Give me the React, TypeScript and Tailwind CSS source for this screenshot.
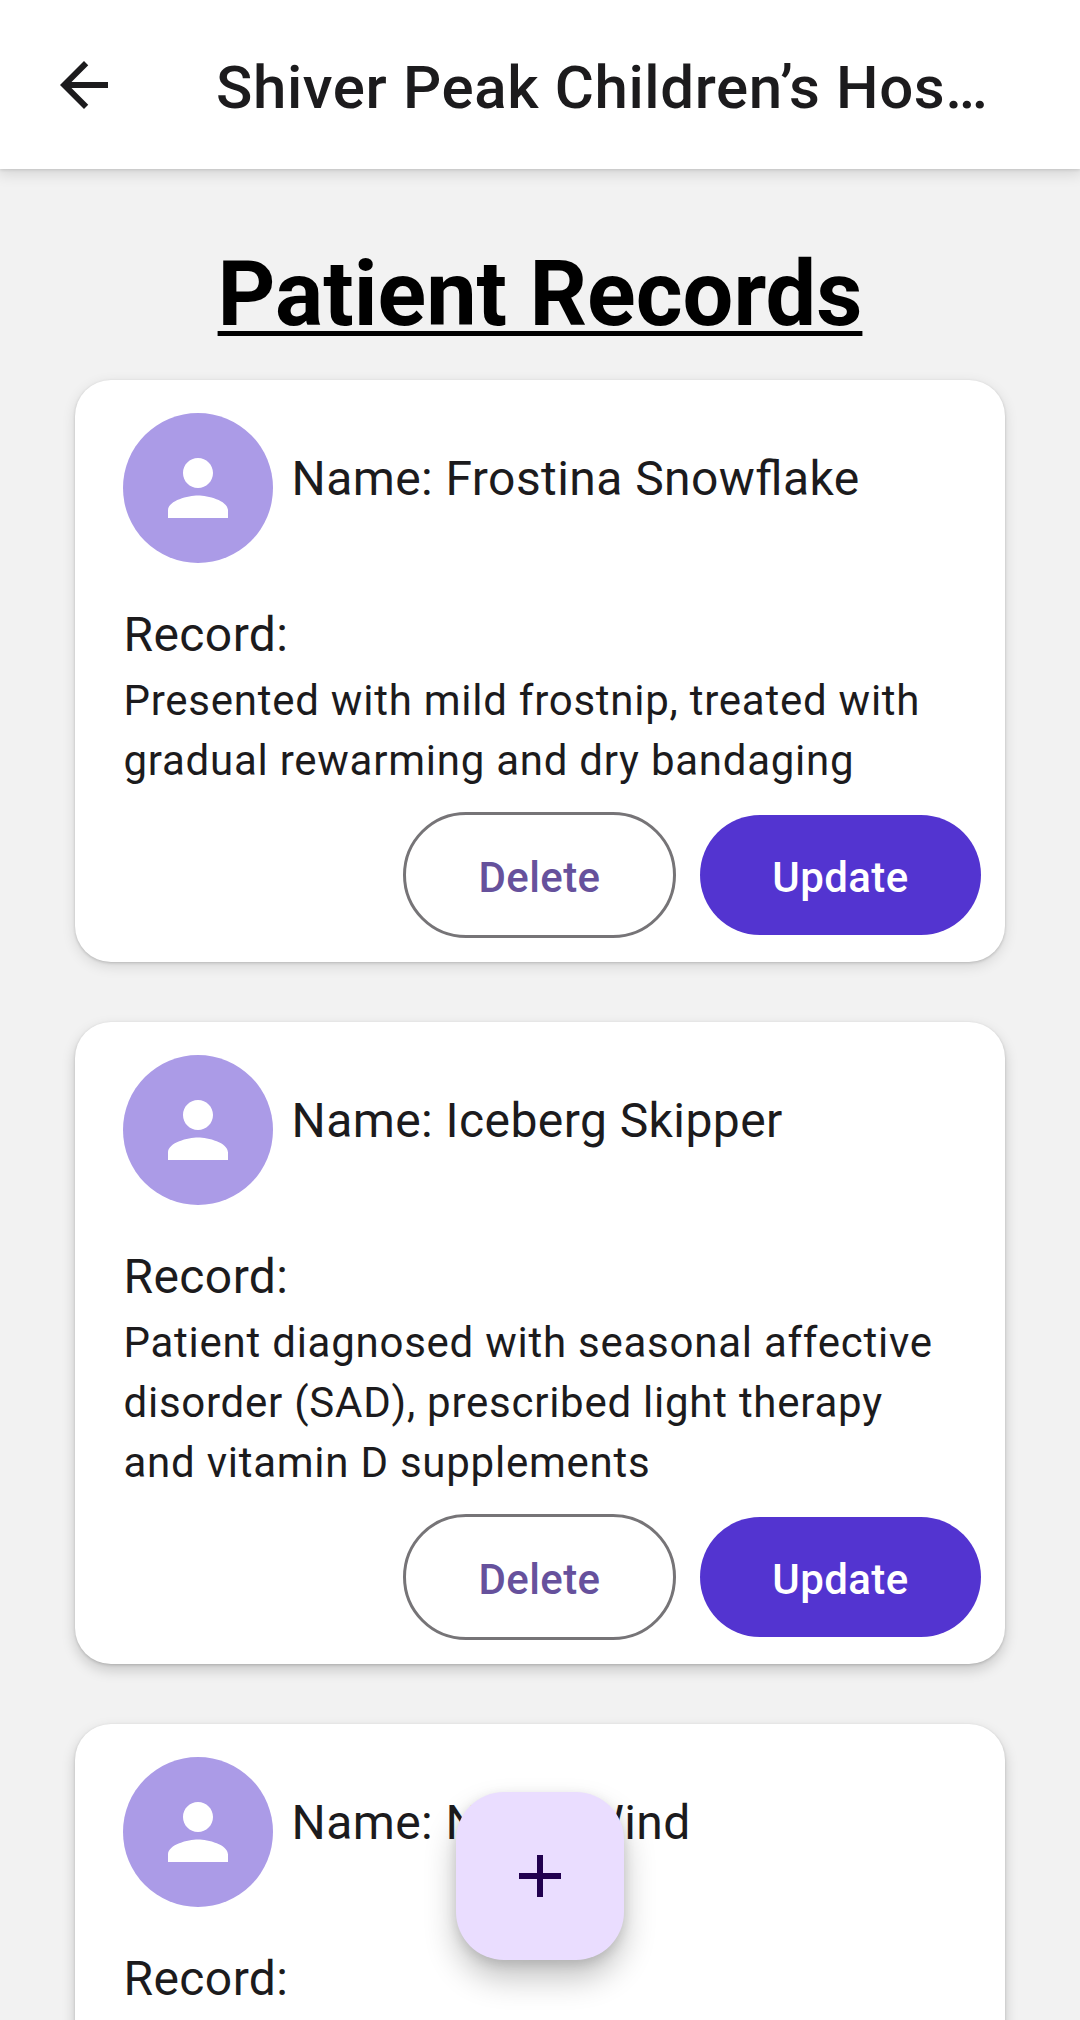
type PatientRecord = { name: string; record: string; shadow: string };

const patients: PatientRecord[] = [
  {
    name: "Frostina Snowflake",
    record: "Presented with mild frostnip, treated with gradual rewarming and dry bandaging",
    shadow: "shadow-[0_1px_3px_rgba(0,0,0,0.18),0_4px_14px_rgba(0,0,0,0.12)]",
  },
  {
    name: "Iceberg Skipper",
    record: "Patient diagnosed with seasonal affective disorder (SAD), prescribed light therapy and vitamin D supplements",
    shadow: "shadow-[0_1px_3px_rgba(0,0,0,0.16),0_6px_14px_rgba(0,0,0,0.18)]",
  },
  {
    name: "North Wind",
    record: "",
    shadow: "shadow-[0_1px_3px_rgba(0,0,0,0.16),0_6px_14px_rgba(0,0,0,0.18)]",
  },
];

function BackIcon() {
  return (
    <svg viewBox="0 0 24 24" className="size-[72px] fill-[#1c1b1d]">
      <path d="M20 11H7.83l5.59-5.59L12 4l-8 8 8 8 1.41-1.41L7.83 13H20v-2z" />
    </svg>
  );
}

function Avatar() {
  return (
    <div className="flex size-[150px] shrink-0 items-center justify-center rounded-full bg-[#ab9be7]">
      <svg viewBox="0 0 24 24" className="size-[90px] fill-white">
        <path d="M12 12c2.21 0 4-1.79 4-4s-1.79-4-4-4-4 1.79-4 4 1.79 4 4 4zm0 2c-2.67 0-8 1.34-8 4v2h16v-2c0-2.66-5.33-4-8-4z" />
      </svg>
    </div>
  );
}

function PatientCard({ name, record, shadow }: PatientRecord) {
  return (
    <article className={`flex min-h-[522px] flex-col rounded-[36px] bg-white pt-[33px] pr-6 pb-6 pl-12 ${shadow}`}>
      <div className="flex h-[150px] gap-[18px]">
        <Avatar />
        <h2 className="pt-[30px] pl-[0.5px] text-[48px] leading-[72px] tracking-[0.43px] whitespace-nowrap [font-feature-settings:'liga']">
          Name: {name}
        </h2>
      </div>
      <h3 className="mt-9 pl-[0.5px] text-[48px] leading-[72px] tracking-[0.4px]">Record:</h3>
      {record && (
        <p className="w-[834px] pl-[0.5px] text-[42px] leading-[60px] tracking-[0.75px]">{record}</p>
      )}
      {record && (
        <div className="mt-[21px] flex items-center justify-end gap-6 text-[42px] leading-[60px] font-medium tracking-[0.4px]">
          <button className="h-[126px] w-[273px] rounded-[63px] border-3 border-[#767477] pt-1.5 text-[#66519c]">
            Delete
          </button>
          <button className="h-[120px] w-[281px] rounded-[60px] bg-[#5334d0] pt-1.5 text-white">Update</button>
        </div>
      )}
    </article>
  );
}

export default function App() {
  return (
    <div className="relative flex h-[2020px] w-[1080px] flex-col overflow-hidden bg-[#f2f2f2] font-[Roboto,sans-serif] text-[#1c1b1d]">
      <header className="z-10 flex h-[169px] shrink-0 bg-white pl-12 shadow-[0_1px_3px_rgba(0,0,0,0.12),0_3px_14px_2px_rgba(0,0,0,0.12)]">
        <button className="mt-[49px] size-[72px]">
          <BackIcon />
        </button>
        <span className="mt-[46px] ml-24 text-[60px] leading-[84px] font-medium tracking-[0.62px] whitespace-nowrap">
          Shiver Peak Children’s Hos…
        </span>
      </header>
      <main className="flex flex-col px-[75px] pt-[66px]">
        <h1 className="text-center text-[90px] leading-[120px] font-bold text-black underline decoration-[5px] underline-offset-[6px]">
          Patient Records
        </h1>
        <section className="mt-[25px] flex flex-col gap-[60px]">
          {patients.map((patient) => (
            <PatientCard key={patient.name} {...patient} />
          ))}
        </section>
      </main>
      <button className="absolute bottom-[60px] left-[456px] flex size-[168px] items-center justify-center rounded-[48px] bg-[#eaddff] shadow-[0_4px_12px_rgba(0,0,0,0.12),0_18px_32px_rgba(0,0,0,0.24)]">
        <svg viewBox="0 0 24 24" className="size-[72px] fill-[#21004f]">
          <path d="M19 13h-6v6h-2v-6H5v-2h6V5h2v6h6v2z" />
        </svg>
      </button>
    </div>
  );
}
